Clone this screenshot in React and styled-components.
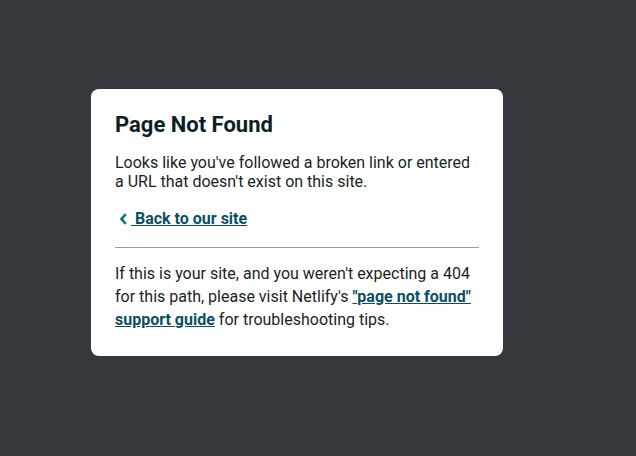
import React from 'react';
import styled, { createGlobalStyle } from 'styled-components';

const GlobalStyle = createGlobalStyle`
  html, body {
    margin: 0;
    padding: 0;
    background: #35393e;
  }
  body {
    font-family: Roboto, "Liberation Sans", sans-serif;
    color: #1a1f24;
  }
`;

const Page = styled.main`
  min-height: 456px;
  box-sizing: border-box;
  padding: 89px 0 0 91px;
`;

const Card = styled.section`
  width: 412px;
  box-sizing: border-box;
  padding: 24px 24px 25px;
  background: #ffffff;
  border-radius: 8px;
`;

const Title = styled.h1`
  margin: 0 0 16px;
  font-size: 22px;
  font-weight: 700;
  line-height: 24px;
  color: #0e1e25;
`;

const Text = styled.p`
  margin: 0;
  font-size: 16px;
  line-height: ${(p) => p.$lh || '19px'};
`;

const BackLink = styled.a`
  display: inline-flex;
  align-items: center;
  margin-top: 18px;
  font-size: 16px;
  font-weight: 700;
  line-height: 19px;
  color: #0b4f62;
  text-decoration: underline;
  cursor: pointer;
  white-space: pre;

  svg {
    margin-right: 4px;
    flex: none;
  }
`;

const Divider = styled.hr`
  margin: 18px 0 14px;
  border: 0;
  border-top: 1px solid #9a9a9a;
  height: 0;
`;

const Link = styled.a`
  font-weight: 700;
  color: #0b4f62;
  text-decoration: underline;
`;

const Chevron = () => (
  <svg width="12" height="12" viewBox="0 0 12 12">
    <path d="M10.8 1.2 L6.4 6 L10.8 10.8" fill="none" stroke="#0d7a76" strokeWidth="2.6" />
  </svg>
);

export default function App() {
  return (
    <>
      <GlobalStyle />
      <Page>
        <Card>
          <Title>Page Not Found</Title>
          <Text>
            Looks like you've followed a broken link or entered a URL that doesn't exist on this
            site.
          </Text>
          <BackLink href="#">
            <Chevron />
            <span> Back to our site</span>
          </BackLink>
          <Divider />
          <Text $lh="23px">
            If this is your site, and you weren't expecting a 404 for this path, please visit
            Netlify's <Link href="#">"page not found" support guide</Link> for troubleshooting
            tips.
          </Text>
        </Card>
      </Page>
    </>
  );
}
